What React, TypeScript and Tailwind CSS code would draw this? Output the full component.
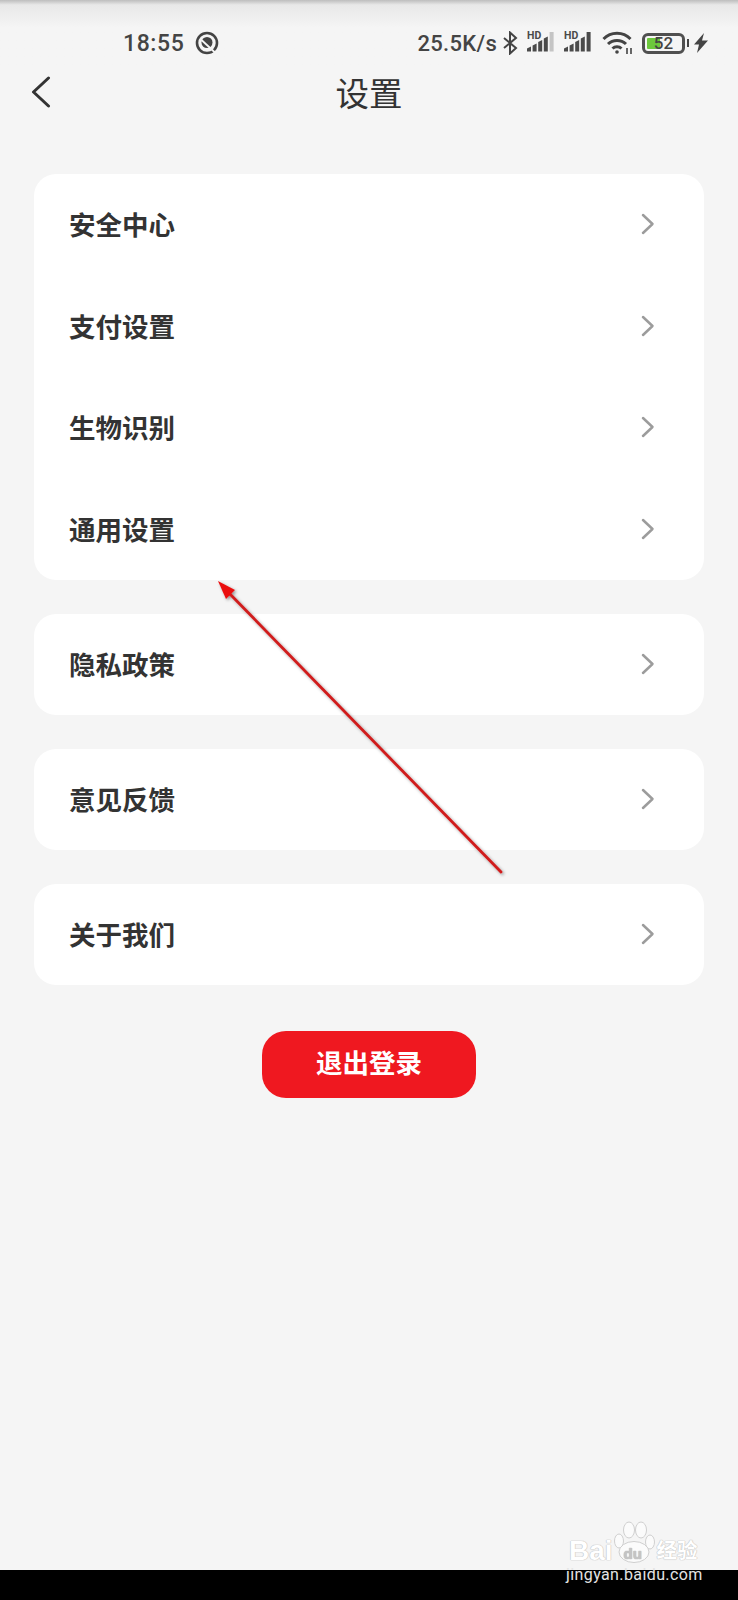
const groups = [
  ["安全中心", "支付设置", "生物识别", "通用设置"],
  ["隐私政策"],
  ["意见反馈"],
  ["关于我们"],
];

const cjk = "font-['Roboto','Noto_Sans_CJK_SC',sans-serif]";

function Signal({ dim }: { dim?: boolean }) {
  return (
    <svg width="27" height="22" viewBox="0 0 27 22" fill="#4a4a4a">
      <text x="0" y="8.5" fontSize="10.5" fontWeight="700" fontFamily="Roboto, sans-serif">HD</text>
      <path d="M0 21.5V18.5L4 16.5V21.5z" />
      <path d="M5.6 21.5V15.5L9.6 13.5V21.5z" />
      <path d="M11.2 21.5V12L15.2 10V21.5z" />
      <path d="M16.8 21.5V8.5L20.8 6.5V21.5z" />
      <rect x="22.6" y="2" width="4" height="19.5" fill={dim ? "#c4c4c4" : "#4a4a4a"} />
    </svg>
  );
}

function StatusBar() {
  return (
    <div className="flex h-[70px] items-start justify-between bg-gradient-to-b from-[#bdbdbd] via-[#e8e8e8] via-[7%] to-[#f5f5f5] to-[40%] pl-[123px] pr-[30px] pt-[28px] text-[#444]">
      <div className="flex items-center gap-[11px]">
        <span className="pt-[2px] font-['Roboto',sans-serif] text-[23px] font-medium leading-[28px] tracking-[0.6px]">18:55</span>
        <svg width="24" height="24" viewBox="0 0 24 24" fill="none" stroke="#444">
          <circle cx="12" cy="12" r="10" strokeWidth="2.6" />
          <circle cx="12" cy="11.5" r="5.5" fill="#444" strokeWidth="0" />
          <path d="M6.5 9l14 13" stroke="#f5f5f5" strokeWidth="1.8" />
        </svg>
      </div>
      <div className="flex items-center">
        <span className="pt-[2px] font-['Roboto',sans-serif] text-[22px] font-medium leading-[28px] tracking-[0.3px]">25.5K/s</span>
        <svg className="ml-[6px]" width="15" height="24" viewBox="0 0 15 24" fill="none" stroke="#444" strokeWidth="2">
          <path d="M1 7l12 10-6 5.5V1.5L13 7 1 17" />
        </svg>
        <div className="mb-[4px] ml-[9px]"><Signal dim /></div>
        <div className="mb-[4px] ml-[10px]"><Signal /></div>
        <svg className="ml-[11px]" width="31" height="24" viewBox="0 0 31 24" fill="none" stroke="#444" strokeWidth="3">
          <path d="M1.5 8a19 19 0 0 1 27 0" />
          <path d="M6 13a13 13 0 0 1 18 0" />
          <path d="M10.5 17.5a6.5 6.5 0 0 1 9 0" />
          <circle cx="15" cy="21" r="1.8" fill="#444" stroke="none" />
          <path d="M25 17v6M29 17v6" strokeWidth="1.6" />
        </svg>
        <div className="relative ml-[9px] flex h-[21px] w-[43px] items-center rounded-[6px] border-[3px] border-[#505050] p-[2px]">
          <div className="h-full w-[40%] rounded-[1px] bg-[#6cc83c]" />
          <span className="absolute inset-0 flex items-center justify-center font-['Roboto',sans-serif] text-[17px] font-medium leading-none">52</span>
        </div>
        <div className="ml-[2px] h-[8px] w-[2px] bg-[#444]" />
        <svg className="ml-[5px]" width="14" height="20" viewBox="0 0 14 20" fill="#444">
          <path d="M10 0L0 11.5h5L3 20l11-12.5H8z" />
        </svg>
      </div>
    </div>
  );
}

function Row({ label }: { label: string }) {
  return (
    <div className="flex h-[101.5px] items-center justify-between pl-[35px] pr-[49px]">
      <span className="pt-[3px] text-[26.5px] font-bold leading-none text-[#333]">{label}</span>
      <svg className="mb-[1px]" width="14" height="22" viewBox="0 0 14 22" fill="none" stroke="#9c9c9c" strokeWidth="2.5" strokeLinecap="round" strokeLinejoin="round">
        <path d="M2 2l9.5 9L2 20" />
      </svg>
    </div>
  );
}

export default function App() {
  return (
    <div className={`relative flex h-[1600px] w-[738px] flex-col overflow-hidden bg-[#f5f5f5] ${cjk}`}>
      <StatusBar />

      <div className="relative flex h-[46px] items-center justify-center">
        <svg className="absolute left-[31px] top-[6px]" width="20" height="32" viewBox="0 0 20 32" fill="none" stroke="#333" strokeWidth="3" strokeLinecap="round" strokeLinejoin="round">
          <path d="M17.5 2L2.5 16l15 14" />
        </svg>
        <h1 className="pt-[4px] text-[33.5px] font-normal leading-none text-[#333]">设置</h1>
      </div>

      <div className="mt-[58px] flex flex-col gap-[33.5px] px-[34px]">
        {groups.map((rows) => (
          <div key={rows[0]} className="rounded-[22px] bg-white">
            {rows.map((r) => (
              <Row key={r} label={r} />
            ))}
          </div>
        ))}
      </div>

      <button className="mx-auto mt-[46px] flex h-[67px] w-[214px] items-center justify-center rounded-[24px] bg-[#ef1820] text-[26.5px] font-bold leading-none text-white">
        退出登录
      </button>

      <div className="mt-auto h-[30px] bg-black" />

      {/* annotation arrow */}
      <svg className="absolute left-0 top-0" width="738" height="1600" fill="none">
        <defs>
          <filter id="sh" x="-10%" y="-10%" width="120%" height="120%">
            <feDropShadow dx="1.5" dy="1.5" stdDeviation="1.5" floodColor="#000" floodOpacity="0.4" />
          </filter>
        </defs>
        <g filter="url(#sh)">
          <path d="M501 872L228 592" stroke="#d01c1c" strokeWidth="2.8" strokeLinecap="round" />
          <path d="M218 581l17 9-9 9z" fill="#ea1010" />
        </g>
      </svg>

      {/* baidu watermark */}
      <div className="absolute left-[569px] top-[1520px] flex items-start font-['Liberation_Sans','Noto_Sans_CJK_SC',sans-serif] text-white [text-shadow:0_0_1px_#c4c4c4,0_0_1px_#c4c4c4,0_0_1px_#c4c4c4]">
        <span className="mt-[17px] text-[28px] font-bold leading-[28px]">Bai</span>
        <svg className="ml-[1px]" width="41" height="44" viewBox="0 0 41 44" fill="#fbfbfb" stroke="#cfcfcf" strokeWidth="1">
          <ellipse cx="15" cy="10" rx="5.5" ry="8" />
          <ellipse cx="27" cy="10" rx="5.5" ry="8" />
          <ellipse cx="5" cy="21" rx="4.5" ry="7" />
          <ellipse cx="36" cy="22" rx="4.5" ry="7" />
          <ellipse cx="20" cy="32" rx="15" ry="10.5" />
          <text x="9.5" y="39" fontSize="15" fontWeight="700" fontFamily="Liberation Sans, sans-serif" fill="#c4c4c4" stroke="none">du</text>
        </svg>
        <span className="ml-[2px] mt-[20px] text-[20.5px] font-bold leading-[22px]">经验</span>
      </div>
      <div className="absolute left-[566px] top-[1565px] font-['Roboto',sans-serif] text-[16px] leading-[20px] tracking-[0.4px] text-[#e4e4e4]">
        jingyan.baidu.com
      </div>
    </div>
  );
}
